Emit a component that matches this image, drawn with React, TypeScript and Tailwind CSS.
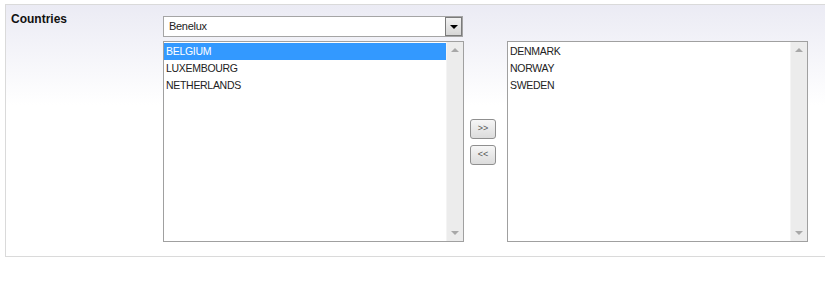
import { ReactNode } from 'react';

const font = { fontFamily: '"Liberation Sans", Arial, sans-serif' };

function Scrollbar() {
  return (
    <div className="w-[17px] h-full bg-[#ececec] border-l border-[#f4f4f4] flex flex-col items-center justify-between py-[6px]">
      <div className="w-0 h-0 border-l-[4px] border-r-[4px] border-b-[4px] border-l-transparent border-r-transparent border-b-[#a8a8a8]" />
      <div className="w-0 h-0 border-l-[4px] border-r-[4px] border-t-[4px] border-l-transparent border-r-transparent border-t-[#a8a8a8]" />
    </div>
  );
}

function ListBox({ items, selected }: { items: string[]; selected?: string }) {
  return (
    <div className="w-[301px] h-[201px] border border-[#a0a0a0] bg-white flex">
      <div className="flex-1 flex flex-col pt-[1px]">
        {items.map((item) => (
          <div
            key={item}
            className={
              item === selected
                ? 'h-[17px] leading-[17px] pl-[2px] text-[10.5px] tracking-[-0.3px] bg-[#3399ff] text-white'
                : 'h-[17px] leading-[17px] pl-[2px] text-[10.5px] tracking-[-0.3px] text-[#222]'
            }
          >
            {item}
          </div>
        ))}
      </div>
      <Scrollbar />
    </div>
  );
}

function MoveButton({ children }: { children: ReactNode }) {
  return (
    <button className="w-[26px] h-[20px] rounded-[3px] border border-[#8f8f8f] bg-gradient-to-b from-[#f6f6f6] to-[#dcdcdc] text-[9px] leading-none text-[#555] flex items-center justify-center">
      {children}
    </button>
  );
}

export default function App() {
  return (
    <div className="w-[825px] h-[297px] bg-white pl-[5px] pt-[4px] overflow-hidden" style={font}>
      <div className="flex h-[253px] border-t border-l border-b border-[#dadada] bg-gradient-to-b from-[#ebebf4] via-white via-[40%] to-white">
        <div className="w-[157px] shrink-0 pl-[5px] pt-[5px] text-[12px] font-bold text-[#111]">Countries</div>
        <div className="pt-[11px] flex flex-col gap-[4px]">
          <div className="w-[300px] h-[21px] border border-[#a5a5a5] bg-white flex items-center">
            <span className="flex-1 pl-[5px] text-[11px] tracking-[-0.3px] text-[#222]">Benelux</span>
            <div className="w-[17px] h-[19px] border border-[#7b7b7b] bg-gradient-to-b from-[#f2f2f2] to-[#d6d6d6] flex items-center justify-center">
              <div className="w-0 h-0 border-l-[4px] border-r-[4px] border-t-[4px] border-l-transparent border-r-transparent border-t-black" />
            </div>
          </div>
          <div className="flex">
            <ListBox items={['BELGIUM', 'LUXEMBOURG', 'NETHERLANDS']} selected="BELGIUM" />
            <div className="w-[43px] shrink-0 flex flex-col items-start justify-center gap-[6px] pl-[6px]">
              <MoveButton>&gt;&gt;</MoveButton>
              <MoveButton>&lt;&lt;</MoveButton>
            </div>
            <ListBox items={['DENMARK', 'NORWAY', 'SWEDEN']} />
          </div>
        </div>
      </div>
    </div>
  );
}
